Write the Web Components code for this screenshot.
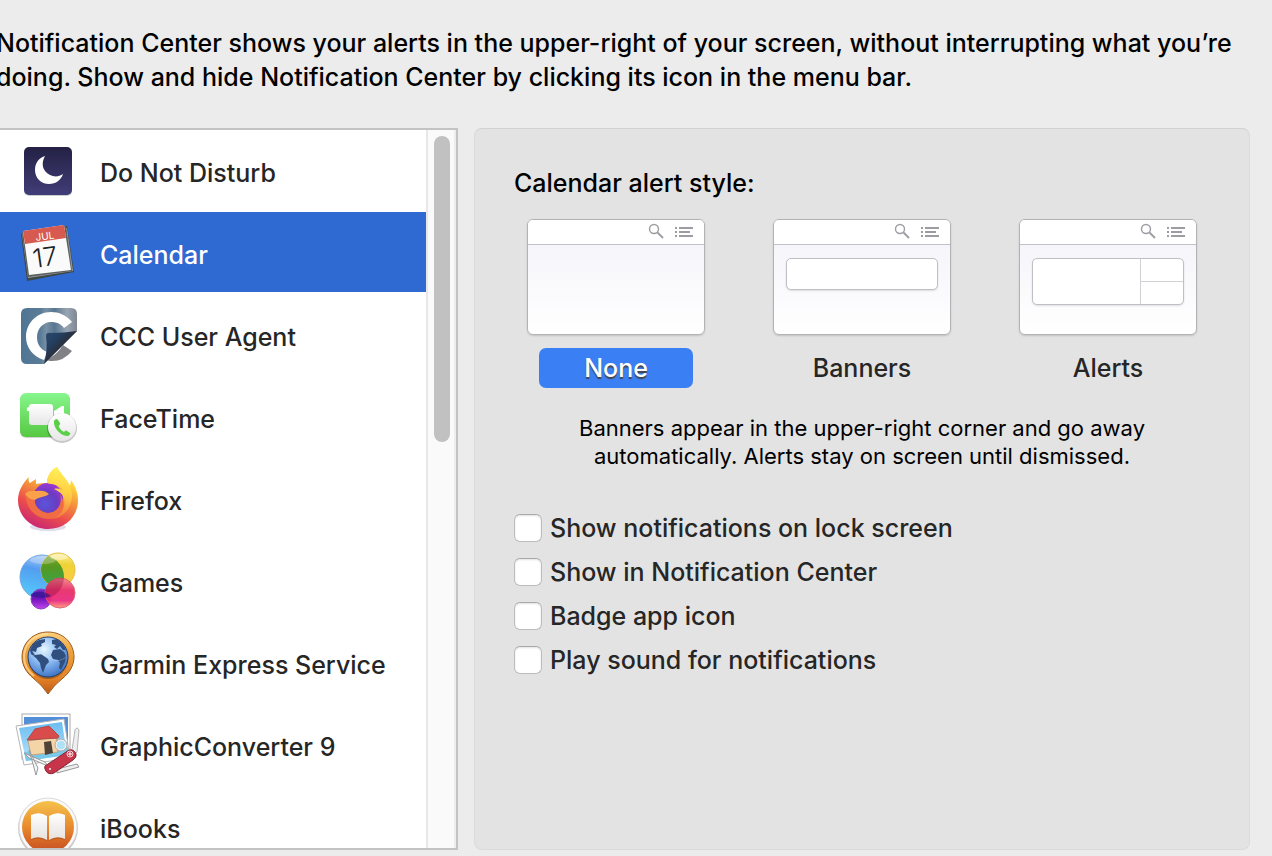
<!DOCTYPE html>
<html lang="en">
<head>
<meta charset="utf-8">
<meta name="viewport" content="width=device-width, initial-scale=1">
<title>Notifications</title>
<style>
  html, body {
    height: 100%;
    margin: 0;
  }
  body {
    background: #ececec;
    color: #000;
    font-family: Inter, "Liberation Sans", sans-serif;
    font-size: 25px;
    font-weight: 450;
    overflow: hidden;
  }
</style>
</head>
<body>
<notification-prefs></notification-prefs>

<script>
const icons = {
  moon: `
    <defs><linearGradient id="g" x2="0" y2="1"><stop stop-color="#242144"/><stop offset="1" stop-color="#413d78"/></linearGradient></defs>
    <rect x="24" y="18" width="48" height="48" rx="5" fill="#000" opacity=".2"/>
    <rect x="24" y="17" width="48" height="48" rx="5" fill="url(#g)"/>
    <path d="M45 26C38 28 35 34 35 40C35 48 41 54 49 54C56 54 61 50 63 44C59 47 54 47 50 45C42 41 41 33 45 26Z" fill="#fff"/>`,
  calendar: `
    <path d="M21 22L67 14L74 60L27 69Z" fill="#3f4747"/>
    <path d="M22 22L67 16L73 59L28 66Z" fill="#9ba1a0"/>
    <path d="M22 21L66 14L72 59L28 65Z" fill="#59605f"/>
    <path d="M23 19L64 13L71 58L29 63Z" fill="#fafafa"/>
    <path d="M23 19L64 13L66 26L25 32Z" fill="#d65a50"/>
    <text x="36" y="29" transform="rotate(-8 36 29)" font-size="10" font-weight="400" fill="#fff">JUL</text>
    <text x="34" y="56" transform="rotate(-8 34 56)" font-size="26" font-weight="300" fill="#222">17</text>`,
  ccc: `
    <defs>
      <linearGradient id="g"><stop stop-color="#4f7594"/><stop offset=".35" stop-color="#5a7c98"/><stop offset=".45" stop-color="#7890a5"/><stop offset=".6" stop-color="#587690"/><stop offset=".82" stop-color="#98a5b3"/><stop offset="1" stop-color="#7f8893"/></linearGradient>
      <linearGradient id="f" x2="1" y2="1"><stop stop-color="#2b4c70"/><stop offset=".3" stop-color="#243f60"/><stop offset=".5" stop-color="#29303d"/><stop offset=".6" stop-color="#10151d"/></linearGradient>
    </defs>
    <path d="M46 66Q57 61 63 51L72 57Q63 68 50 67Z" fill="#808085"/>
    <path d="M27 14H71Q77 14 77 20V37L44 70H27Q21 70 21 64V20Q21 14 27 14Z" fill="url(#g)"/>
    <path d="M72 28C66 21 59 18 51 18C37 18 26 29 26 43C26 53 33 63 44 66L47 58C40 55 37 50 37 43C37 35 43 28 51 28C57 28 61 30 64 34Z" fill="#fff"/>
    <path d="M46 42Q46 38 51 39Q64 39 77 37L44 70Q48 56 46 42Z" fill="url(#f)"/>`,
  facetime: `
    <defs>
      <linearGradient id="g" x2="0" y2="1"><stop stop-color="#87f68d"/><stop offset="1" stop-color="#56c842"/></linearGradient>
      <linearGradient id="w" x2="0" y2="1"><stop stop-color="#fff"/><stop offset="1" stop-color="#e6e6e6"/></linearGradient>
    </defs>
    <rect x="20" y="18" width="50" height="44" rx="6" fill="#000" opacity=".18"/>
    <rect x="20" y="17" width="50" height="44" rx="6" fill="url(#g)"/>
    <path d="M29 31Q26 31 27 35H29Z" fill="#f7fff7"/>
    <rect x="29" y="28" width="24" height="21" rx="3" fill="url(#w)"/>
    <path d="M54 37V35L62 30H64V43H54Z" fill="#fff"/>
    <circle cx="62" cy="52" r="15" fill="#000" opacity=".22"/>
    <circle cx="62" cy="51" r="14" fill="url(#w)"/>
    <path d="M54 45C55 43 57 42 58 44L60 47C61 49 58 49 59 51C60 53 62 55 64 56C65 55 66 54 67 55L70 57C71 58 69 60 67 60C60 60 53 51 54 45Z" fill="#5ccf4a"/>`,
  firefox: `
    <defs>
      <linearGradient id="g" x1=".85" y1=".05" x2=".4" y2="1"><stop stop-color="#fff44f"/><stop offset=".2" stop-color="#ffd43c"/><stop offset=".42" stop-color="#f59a3a"/><stop offset=".72" stop-color="#ec4e4c"/><stop offset="1" stop-color="#cc2a70"/></linearGradient>
      <linearGradient id="y" x1=".5" x2=".4" y2="1"><stop stop-color="#fff257"/><stop offset=".5" stop-color="#ffcd43"/><stop offset="1" stop-color="#f2703f"/></linearGradient>
      <radialGradient id="p" cx=".4" cy=".7" r=".8"><stop stop-color="#5a55dc"/><stop offset=".5" stop-color="#6a3cc0"/><stop offset="1" stop-color="#ad35df"/></radialGradient>
    </defs>
    <ellipse cx="48" cy="69" rx="18" ry="4" fill="#55338a" opacity=".18"/>
    <path d="M29 19C28 22 29 24 30 25L36 21V26C40 25 44 25 47 25C47 18 51 12 57 9C60 15 66 20 70 28L71 22C75 28 78 34 78 42C78 59 65 71 48 71C31 71 18 58 18 42C18 33 23 25 29 19Z" fill="url(#g)"/>
    <circle cx="48" cy="40" r="15" fill="url(#p)"/>
    <path d="M57 9C60 16 68 21 71 31C75 43 67 61 50 61C61 58 66 48 64 41C63 36 60 34 54 31C58 30 61 31 63 33C61 26 53 27 47 25C47 18 51 12 57 9Z" fill="url(#y)"/>
    <path d="M60 36C63 45 58 55 47 55C40 54 34 47 35 42C31 42 27 39 25 36L26 41C28 53 38 61 49 61C61 60 68 48 60 36Z" fill="#f06c43"/>
    <path d="M25 36C28 32 32 33 37 33C42 32 46 33 49 36C44 40 40 38 35 42C31 42 27 39 25 36Z" fill="#f9a24a"/>`,
  games: `
    <defs>
      <linearGradient id="b" x1=".6" x2=".4" y2="1"><stop stop-color="#b5d0fa"/><stop offset=".35" stop-color="#539df0"/><stop offset="1" stop-color="#55ccfb"/></linearGradient>
      <linearGradient id="y" x2="0" y2="1"><stop stop-color="#fff09a"/><stop offset=".35" stop-color="#eed335"/><stop offset="1" stop-color="#ffc94c"/></linearGradient>
      <linearGradient id="r" x2="0" y2="1"><stop stop-color="#f58f98"/><stop offset=".4" stop-color="#e72e66"/><stop offset=".75" stop-color="#ea2a80"/><stop offset="1" stop-color="#ff9a78"/></linearGradient>
      <linearGradient id="v" x2="0" y2="1"><stop stop-color="#7830be"/><stop offset=".5" stop-color="#7115ba"/><stop offset="1" stop-color="#c444ee"/></linearGradient>
      <linearGradient id="e" x2="0" y2="1"><stop stop-color="#8eac32"/><stop offset=".4" stop-color="#579820"/><stop offset="1" stop-color="#35a651"/></linearGradient>
      <clipPath id="c"><circle cx="42" cy="37" r="22"/></clipPath>
    </defs>
    <circle cx="42" cy="37" r="22" fill="url(#b)" stroke="#6fa8e1"/>
    <circle cx="58" cy="30" r="17" fill="url(#y)" stroke="#e5bd42"/>
    <circle cx="58" cy="30" r="17" fill="url(#e)" clip-path="url(#c)"/>
    <circle cx="41" cy="59" r="10" fill="url(#v)" stroke="#8a40c0"/>
    <circle cx="60" cy="53" r="15" fill="url(#r)" opacity=".94" stroke="#de5c6b"/>
    <circle cx="60" cy="53" r="15" fill="#a3083d" opacity=".35" clip-path="url(#c)"/>
    <path d="M31 54Q41 48 51 56Q42 60 31 56Z" fill="#28128f" opacity=".65"/>
    <ellipse cx="43" cy="20" rx="13" ry="4" fill="#fff" opacity=".25"/>
    <ellipse cx="59" cy="17" rx="9" ry="3" fill="#fff" opacity=".4"/>`,
  garmin: `
    <defs>
      <linearGradient id="o" x2="0" y2="1"><stop stop-color="#ffd07c"/><stop offset=".3" stop-color="#eda33f"/><stop offset=".75" stop-color="#e38227"/><stop offset="1" stop-color="#bf5916"/></linearGradient>
      <radialGradient id="b" cx=".4" cy=".3" r=".7"><stop stop-color="#e8f7ff"/><stop offset=".5" stop-color="#8ebcf3"/><stop offset="1" stop-color="#4277c7"/></radialGradient>
    </defs>
    <path d="M48 10C33 10 22 21 22 35C22 44 27 51 33 56Q42 63 48 72Q54 63 63 56C69 51 74 44 74 35C74 21 63 10 48 10Z" fill="url(#o)" stroke="#9a5b21"/>
    <path d="M48 12C34 12 24 22 24 35C24 43 29 50 34 54" fill="none" stroke="#ffe0a0" stroke-width="2" opacity=".7"/>
    <circle cx="48" cy="37" r="20" fill="#7b4a18" opacity=".6"/>
    <circle cx="48" cy="35" r="20" fill="url(#b)" stroke="#263f6c"/>
    <path d="M30 28Q33 20 39 18L45 17L45 20L41 22L42 24L37 26L36 30L32 29L35 33L41 32L48 37L49 40L46 43L43 51L41 46L40 41L36 36L31 32ZM52 18L57 17Q64 22 66 28L63 28L60 24L57 27L54 25L56 23L52 22ZM53 28L60 27L64 30L66 34L65 40L61 48L59 46L60 41L58 38L53 37L51 33Z" fill="#304f7e"/>
    <path d="M31 34Q42 29 51 37Q59 41 66 35" fill="none" stroke="#fff" opacity=".25"/>`,
  graphic: `
    <defs>
      <linearGradient id="b" x2="0" y2="1"><stop stop-color="#6cbcf0"/><stop offset="1" stop-color="#b6e5fb"/></linearGradient>
    </defs>
    <rect x="22" y="10" width="48" height="45" fill="#fff" stroke="#aaa"/>
    <path d="M24 13H68V53H24Z" fill="#538ed8"/>
    <path d="M16 22L64 15L70 54L24 61Z" fill="#fff" stroke="#b5b5b5"/>
    <path d="M19 24L62 18L67 51L26 57Z" fill="url(#b)"/>
    <path d="M24 48L68 43L68 51L26 57Z" fill="#79c9e9"/>
    <path d="M28 37L56 33L58 48L31 51Z" fill="#f4d5a8" stroke="#c4a27b"/>
    <path d="M27 36L35 25L49 22L59 32L58 34Z" fill="#d84d4b" stroke="#af4945"/>
    <path d="M44 38L51 37L53 49L45 51Z" fill="#504337"/>
    <path d="M72 46L75 26Q77 22 79 26L77 48L66 59" fill="#eee" stroke="#b7b7b7"/>
    <path d="M24 49L45 58L48 62L29 54ZM29 46L38 64L36 71L33 60Z" fill="#f5f5f5" stroke="#999"/>
    <path d="M57 65L77 60L79 63L57 69Z" fill="#eee" stroke="#999"/>
    <circle cx="61" cy="41" r="5" fill="#b9e8fb" fill-opacity=".7" stroke="#eee" stroke-width="2"/>
    <circle cx="61" cy="41" r="6" fill="none" stroke="#aaa"/>
    <path d="M45 62L69 46Q74 45 76 50Q77 53 73 56L54 69Q48 71 46 67Q44 64 45 62Z" fill="#c7354a" stroke="#842637"/>
    <circle cx="70" cy="50" r="3" fill="none" stroke="#ffd3d8"/>
    <path d="M70 48V52M68 50H72" stroke="#fff"/>
    <circle cx="50" cy="65" r="1" fill="#eee"/>`,
  books: `
    <defs>
      <linearGradient id="g" x2="0" y2="1"><stop stop-color="#f5c24d"/><stop offset=".5" stop-color="#e88a2d"/><stop offset="1" stop-color="#c64a21"/></linearGradient>
      <linearGradient id="w" x2="0" y2="1"><stop stop-color="#fff"/><stop offset="1" stop-color="#e5e1dd"/></linearGradient>
    </defs>
    <circle cx="48" cy="42" r="30" fill="#000" opacity=".22"/>
    <circle cx="48" cy="41" r="29" fill="#fafafa" stroke="#ddd"/>
    <circle cx="48" cy="41" r="26" fill="url(#g)"/>
    <path d="M31 30Q40 26 47 31V55Q39 51 31 54ZM49 31Q57 26 65 30V54Q57 51 49 55Z" fill="#aa4b17" opacity=".5"/>
    <path d="M31 29Q40 25 47 30V54Q39 49 31 53ZM49 30Q57 25 65 29V53Q57 49 49 54Z" fill="url(#w)"/>`,
};

class AppRow extends HTMLElement {
  constructor() {
    super();
    this.attachShadow({ mode: "open" });
  }

  connectedCallback() {
    this.shadowRoot.innerHTML = `
      <style>
        :host { display: block; }
        button {
          display: flex;
          align-items: center;
          gap: 20px;
          width: 100%;
          height: 80px;
          padding: 0;
          border: 0;
          background: none;
          color: #262626;
          font: inherit;
          text-align: left;
          white-space: nowrap;
        }
        :host([selected]) button { background: #2f69d2; color: #fff; }
        svg { display: block; flex: none; }
        span { padding-top: 6px; }
      </style>
      <button type="button">
        <svg width="80" height="80" viewBox="0 0 80 80" aria-hidden="true">${icons[this.getAttribute("icon")]}</svg>
        <span><slot></slot></span>
      </button>
    `;
  }
}

class AppList extends HTMLElement {
  constructor() {
    super();
    this.attachShadow({ mode: "open" });
  }

  connectedCallback() {
    this.shadowRoot.innerHTML = `
      <style>
        :host {
          display: grid;
          grid-template-columns: minmax(0, 1fr) 30px;
          min-height: 0;
          box-sizing: border-box;
          border: 2px solid #c3c3c3;
          border-left: 0;
          background: #fff;
          overflow: hidden;
        }
        .rows {
          display: flex;
          flex-direction: column;
          gap: 2px;
          min-height: 0;
          overflow: hidden;
        }
        .track {
          display: flex;
          justify-content: center;
          min-height: 0;
          padding: 6px 0 0 2px;
          border-left: 2px solid #e7e7e7;
          border-right: 2px solid #ededed;
          background: #fafafa;
        }
        .thumb {
          width: 16px;
          height: 43%;
          border-radius: 8px;
          background: #c1c1c1;
        }
      </style>
      <div class="rows"><slot></slot></div>
      <div class="track"><div class="thumb"></div></div>
    `;
  }
}

class AlertStyle extends HTMLElement {
  constructor() {
    super();
    this.attachShadow({ mode: "open" });
  }

  connectedCallback() {
    const kind = this.getAttribute("kind");
    const selected = this.hasAttribute("selected");
    const popup = kind === "none" ? "" : `<div class="popup ${kind}"><i></i><i></i></div>`;

    this.shadowRoot.innerHTML = `
      <style>
        :host { display: block; }
        button {
          display: flex;
          flex-direction: column;
          align-items: center;
          gap: 13px;
          padding: 0;
          border: 0;
          background: none;
          color: #262626;
          font: inherit;
        }
        .screen {
          box-sizing: border-box;
          width: 178px;
          height: 116px;
          border: 1px solid #b3b3b6;
          border-radius: 6px;
          background: linear-gradient(#f3f2f9, #fff);
          box-shadow: 0 1px 2px rgba(0, 0, 0, .15);
          overflow: hidden;
        }
        .bar {
          display: flex;
          justify-content: flex-end;
          height: 24px;
          padding-right: 10px;
          border-bottom: 1px solid #c2c2c6;
          background: #fff;
        }
        .popup {
          display: grid;
          box-sizing: border-box;
          height: 32px;
          margin: 13px 12px 0;
          border: 1px solid #bfbfc5;
          border-radius: 5px;
          background: #fff;
          box-shadow: 0 1px 2px rgba(0, 0, 0, .12);
        }
        .banners i { display: none; }
        .alerts {
          height: 47px;
          grid-template-columns: 1fr 43px;
          grid-template-rows: 22px 1fr;
        }
        .alerts i {
          grid-column: 2;
          border-left: 1px solid #d2d2d6;
        }
        .alerts i + i { border-top: 1px solid #d2d2d6; }
        .label {
          width: 154px;
          border-radius: 7px;
          line-height: 40px;
        }
        :host([selected]) .label {
          background: #3b7ff5;
          color: #fff;
          text-shadow: 0 2px 1px #444;
        }
      </style>
      <button type="button" aria-pressed="${selected}">
        <div class="screen">
          <div class="bar">
            <svg width="46" height="24" viewBox="0 0 46 24" fill="none" stroke="#9d9ca2" aria-hidden="true">
              <circle cx="6" cy="9" r="4.5" stroke-width="1.4"/>
              <path d="M9.5 12.5L15 18" stroke-width="1.8"/>
              <path d="M27 8H29M31 8H45M27 12H29M31 12H42M27 16H29M31 16H45" stroke-width="2"/>
            </svg>
          </div>
          ${popup}
        </div>
        <div class="label"><slot></slot></div>
      </button>
    `;
  }
}

class CheckOption extends HTMLElement {
  constructor() {
    super();
    this.attachShadow({ mode: "open" });
  }

  connectedCallback() {
    this.shadowRoot.innerHTML = `
      <style>
        :host { display: block; }
        label {
          display: flex;
          align-items: center;
          gap: 8px;
          color: #262626;
          line-height: 28px;
        }
        input {
          appearance: none;
          flex: none;
          box-sizing: border-box;
          width: 28px;
          height: 28px;
          margin: 0;
          border: 1px solid #bcbcbc;
          border-top-color: #a9a9a9;
          border-radius: 6px;
          background: #fff;
          box-shadow: inset 0 1px 2px rgba(0, 0, 0, .12);
        }
        input:checked { background: #3b7ff5; }
      </style>
      <label><input type="checkbox"><span><slot></slot></span></label>
    `;
  }
}

class AlertPanel extends HTMLElement {
  constructor() {
    super();
    this.attachShadow({ mode: "open" });
  }

  connectedCallback() {
    this.shadowRoot.innerHTML = `
      <style>
        :host {
          display: block;
          box-sizing: border-box;
          min-width: 0;
          padding: 39px;
          border: 1px solid #dadada;
          border-top-color: #d2d2d2;
          border-radius: 8px;
          background: #e3e3e3;
        }
        h2 {
          margin: 0 0 21px;
          font-size: inherit;
          font-weight: inherit;
          line-height: 30px;
        }
        .styles {
          display: flex;
          justify-content: center;
          gap: 68px;
        }
        p {
          max-width: 600px;
          margin: 26px auto 44px;
          font-size: 22px;
          font-weight: 400;
          line-height: 28px;
          text-align: center;
        }
        .checks {
          display: flex;
          flex-direction: column;
          gap: 16px;
        }
      </style>
      <h2>Calendar alert style:</h2>
      <div class="styles">
        <alert-style kind="none" selected>None</alert-style>
        <alert-style kind="banners">Banners</alert-style>
        <alert-style kind="alerts">Alerts</alert-style>
      </div>
      <p>Banners appear in the upper-right corner and go away automatically. Alerts stay on screen until dismissed.</p>
      <div class="checks">
        <check-option>Show notifications on lock screen</check-option>
        <check-option>Show in Notification Center</check-option>
        <check-option>Badge app icon</check-option>
        <check-option>Play sound for notifications</check-option>
      </div>
    `;
  }
}

class NotificationPrefs extends HTMLElement {
  constructor() {
    super();
    this.attachShadow({ mode: "open" });
  }

  connectedCallback() {
    this.shadowRoot.innerHTML = `
      <style>
        :host {
          display: grid;
          grid-template-rows: auto minmax(0, 1fr);
          gap: 34px;
          box-sizing: border-box;
          height: 100vh;
          padding: 26px 22px 6px 0;
        }
        .intro {
          margin: 0 0 0 -4px;
          line-height: 34px;
        }
        main {
          display: grid;
          grid-template-columns: minmax(0, 458fr) minmax(0, 776fr);
          gap: 16px;
          min-height: 0;
        }
      </style>
      <p class="intro">Notification Center shows your alerts in the upper-right of your screen, without interrupting what you’re doing. Show and hide Notification Center by clicking its icon in the menu bar.</p>
      <main>
        <app-list>
          <app-row icon="moon">Do Not Disturb</app-row>
          <app-row icon="calendar" selected>Calendar</app-row>
          <app-row icon="ccc">CCC User Agent</app-row>
          <app-row icon="facetime">FaceTime</app-row>
          <app-row icon="firefox">Firefox</app-row>
          <app-row icon="games">Games</app-row>
          <app-row icon="garmin">Garmin Express Service</app-row>
          <app-row icon="graphic">GraphicConverter 9</app-row>
          <app-row icon="books">iBooks</app-row>
        </app-list>
        <alert-panel></alert-panel>
      </main>
    `;
  }
}

customElements.define("app-row", AppRow);
customElements.define("app-list", AppList);
customElements.define("alert-style", AlertStyle);
customElements.define("check-option", CheckOption);
customElements.define("alert-panel", AlertPanel);
customElements.define("notification-prefs", NotificationPrefs);
</script>
</body>
</html>
